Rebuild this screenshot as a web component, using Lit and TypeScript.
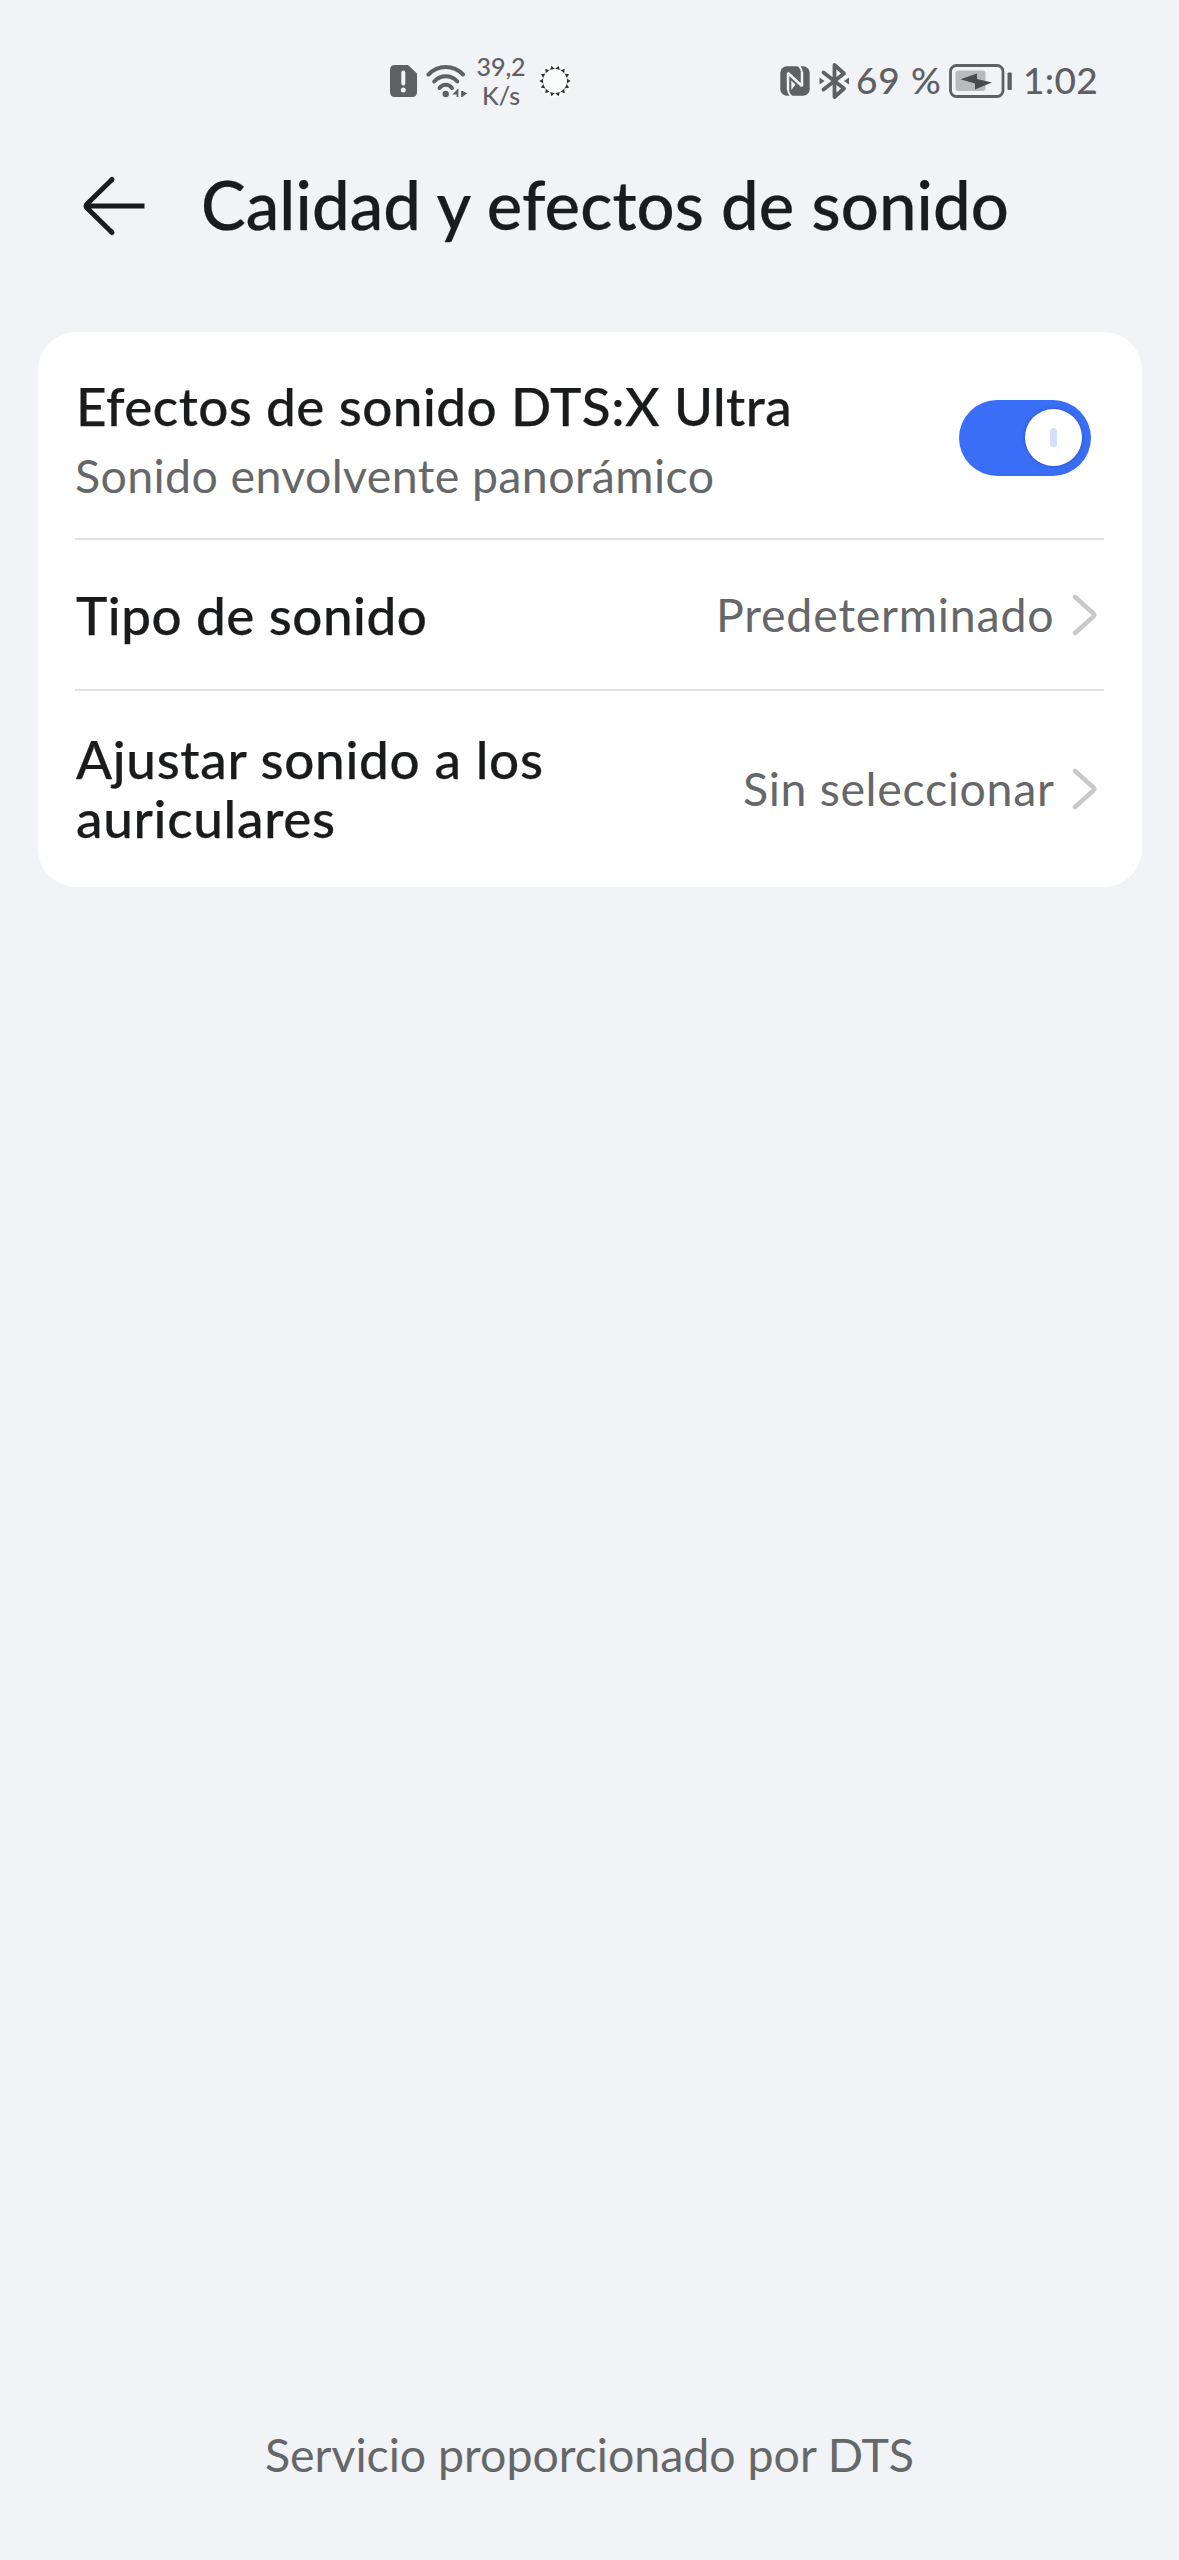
import { LitElement, html, svg, css } from "lit";
import { customElement, property, state } from "lit/decorators.js";

const TICKS = Array.from({ length: 14 }, (_, i) => i * (360 / 14) + 12.86);

@customElement("status-bar")
class StatusBar extends LitElement {
  static styles = css`
    :host {
      display: flex;
      align-items: center;
      justify-content: space-between;
      box-sizing: border-box;
      height: 161px;
      padding: 0 80px 0 389px;
      color: #5f6062;
    }
    .group {
      display: flex;
      align-items: center;
    }
    svg {
      display: block;
      flex: none;
    }
    .wifi {
      margin-left: 9px;
    }
    .speed {
      width: 50px;
      margin-left: 9px;
      font-size: 25px;
      line-height: 29px;
      text-align: center;
      font-weight: 500;
    }
    .busy {
      margin-left: 12px;
    }
    .bt {
      margin-left: 9px;
    }
    .pct,
    .time {
      font-size: 37px;
      line-height: 44px;
      font-weight: 500;
      white-space: nowrap;
      margin-top: -1px;
    }
    .pct {
      width: 84px;
      margin-left: 6px;
      letter-spacing: 0.9px;
    }
    .battery {
      margin-left: 9px;
    }
    .time {
      width: 76px;
      margin-left: 10px;
      letter-spacing: 0.3px;
    }
  `;

  render() {
    return html`
      <div class="group">
        <svg width="28" height="34" viewBox="0 0 28 34">
          <path d="M6 1H19L28 9.500V28Q28 33 23 33H6Q1 33 1 28V6Q1 1 6 1Z" fill="#5f6062" />
          <path d="M14.300 8.500V19.500" stroke="#f1f3f7" stroke-width="4" stroke-linecap="round" />
          <circle cx="14.300" cy="26" r="2.500" fill="#f1f3f7" />
        </svg>
        <svg class="wifi" width="41" height="34" viewBox="0 0 41 34">
          <g fill="none" stroke="#5f6062" stroke-width="4" stroke-linecap="round">
            <path d="M2.500 10.500C12 0.500 27.500 0.500 37 10.500" />
            <path d="M8.200 17.500C14.500 10.600 25 10.600 31.300 17.500" />
            <path d="M13.500 24C17 19.800 22.500 19.800 26 24" />
          </g>
          <circle cx="19.700" cy="30" r="3.200" fill="#5f6062" />
          <path d="M31.500 33V26.500L28.500 29.500H31.500M36 27V33M36 32L39.500 29.500L36 27.500" fill="#5f6062" stroke="#5f6062" stroke-width="1.800" />
        </svg>
        <div class="speed">39,2<br />K/s</div>
        <svg class="busy" width="34" height="34" viewBox="-17 -17 34 34">
          <circle r="16.500" fill="#fbfcfd" />
          <circle r="12.500" fill="none" stroke="#b9b9b9" stroke-width="1" />
          ${TICKS.map((a) => svg`<path d="M-2.200 -12H2.200L0 -15.700Z" fill="#303030" transform="rotate(${a})" />`)}
        </svg>
      </div>
      <div class="group">
        <svg width="30" height="30" viewBox="0 0 30 30">
          <rect x="0.300" y="0.300" width="29.400" height="29.400" rx="6.500" fill="#5f6062" />
          <g fill="none" stroke="#f1f3f7">
            <path d="M8 24V7L22 20V6" stroke-width="2.500" stroke-linejoin="bevel" />
            <path d="M17.500 -1Q21.800 1.500 22 7M12.500 31Q8.200 28.500 8 23" stroke-width="2" />
          </g>
          <path d="M11.300 14.500L15.500 18.500L11.300 24Z" fill="#f1f3f7" />
        </svg>
        <svg class="bt" width="31" height="38" viewBox="0 0 31 38">
          <path d="M4.500 10.500L25 26.500L15.500 35V3L25 11.500L4.500 27.500" fill="none" stroke="#5f6062" stroke-width="3.800" stroke-linecap="round" stroke-linejoin="round" />
          <path d="M0.500 15.500L5.500 19L0.500 22.500ZM30 15.500L25 19L30 22.500Z" fill="#5f6062" />
        </svg>
        <div class="pct">69 %</div>
        <svg class="battery" width="64" height="34" viewBox="0 0 64 34">
          <rect x="1.500" y="1.500" width="52.500" height="31" rx="6" fill="none" stroke="#5f6062" stroke-width="2.800" />
          <rect x="6.500" y="6.500" width="30" height="20.500" rx="3" fill="#b9babd" />
          <path d="M11.500 15.200L28 9.500V15L43 18.500L26 25.500V19.500Z" fill="#4a4b4d" />
          <rect x="58.500" y="8.500" width="4.300" height="17.500" rx="1" fill="#5f6062" />
        </svg>
        <div class="time">1:02</div>
      </div>
    `;
  }
}

@customElement("toggle-switch")
class ToggleSwitch extends LitElement {
  @property({ type: Boolean }) on = false;

  static styles = css`
    .track {
      display: flex;
      align-items: center;
      justify-content: flex-start;
      box-sizing: border-box;
      width: 132px;
      height: 76px;
      padding: 0 9px;
      border-radius: 38px;
      background: #c8c9cc;
    }
    .track.on {
      justify-content: flex-end;
      background: #3b6ef7;
    }
    .thumb {
      display: flex;
      align-items: center;
      justify-content: center;
      width: 57px;
      height: 57px;
      border-radius: 50%;
      background: #fff;
      box-shadow: 0 0 4px rgba(0, 0, 0, 0.25);
    }
    .mark {
      width: 7px;
      height: 19px;
      border-radius: 3.5px;
      background: #d6dffa;
    }
  `;

  render() {
    return html`<div class="track ${this.on ? "on" : ""}">
      <div class="thumb"><div class="mark"></div></div>
    </div>`;
  }
}

@customElement("app-root")
class AppRoot extends LitElement {
  @state() private dtsOn = true;

  static styles = css`
    :host {
      display: flex;
      flex-direction: column;
      height: 2560px;
      background: #f1f3f7;
      color: #1a1b1c;
      font-family: Lato, "Open Sans", sans-serif;
      overflow: hidden;
    }
    .header {
      display: flex;
      align-items: center;
      gap: 54px;
      height: 86px;
      padding-left: 82px;
    }
    .back {
      display: block;
      margin-top: 4px;
    }
    h1 {
      margin: 0;
      font-size: 67px;
      line-height: 80px;
      font-weight: 500;
      letter-spacing: 0.12px;
      white-space: nowrap;
    }
    h1,
    .title {
      -webkit-text-stroke: 0.25px currentColor;
    }
    .card {
      margin: 85px 37.5px 0;
      padding: 0 37.5px;
      border-radius: 38px;
      background: #fff;
    }
    .row {
      display: flex;
      align-items: center;
      justify-content: space-between;
      box-sizing: border-box;
      border-bottom: 2px solid #e3e3e3;
    }
    .effects {
      height: 208px;
      padding: 5px 13px 0 0;
    }
    .effects .title {
      margin-top: 2px;
      letter-spacing: 0.46px;
    }
    .type {
      height: 151px;
    }
    .headphones {
      height: 196px;
      border-bottom: 0;
    }
    .title {
      padding-left: 1px;
      font-size: 53px;
      line-height: 59px;
      font-weight: 500;
      letter-spacing: 0.5px;
    }
    .headphones .title {
      width: 500px;
      margin-top: -2px;
      letter-spacing: 0.7px;
    }
    .sub {
      margin-top: 13px;
      line-height: 54px;
      letter-spacing: 0.38px;
    }
    .sub,
    .value,
    .footer {
      font-size: 46.5px;
      color: #666768;
    }
    .value {
      display: flex;
      align-items: center;
      gap: 16px;
      padding-right: 7.5px;
      line-height: 54px;
    }
    .value span {
      margin-top: -2px;
    }
    .type .value {
      letter-spacing: 0.8px;
    }
    .headphones .value {
      letter-spacing: 0.65px;
    }
    .footer {
      margin-top: auto;
      padding-bottom: 79px;
      line-height: 54px;
      text-align: center;
      letter-spacing: -0.03px;
    }
  `;

  private chevron() {
    return html`<svg width="26" height="42" viewBox="0 0 26 42">
      <path d="M4 3L22.500 19.500Q24 21 22.500 22.500L4 39" fill="none" stroke="#c9c9c9" stroke-width="4.500" stroke-linecap="round" />
    </svg>`;
  }

  render() {
    return html`
      <status-bar></status-bar>
      <div class="header">
        <svg class="back" width="65" height="62" viewBox="0 0 65 62">
          <path d="M30 4.500L5 29Q3 31 5 33L30 57.500M4.500 31H62.500" fill="none" stroke="#1a1b1c" stroke-width="5" />
          <path d="M30 4.500L29.500 5M30 57.500L29.500 57" stroke="#1a1b1c" stroke-width="5" stroke-linecap="round" />
        </svg>
        <h1>Calidad y efectos de sonido</h1>
      </div>
      <div class="card">
        <div class="row effects">
          <div>
            <div class="title">Efectos de sonido DTS:X Ultra</div>
            <div class="sub">Sonido envolvente panorámico</div>
          </div>
          <toggle-switch ?on=${this.dtsOn} @click=${() => (this.dtsOn = !this.dtsOn)}></toggle-switch>
        </div>
        <div class="row type">
          <div class="title">Tipo de sonido</div>
          <div class="value"><span>Predeterminado</span>${this.chevron()}</div>
        </div>
        <div class="row headphones">
          <div class="title">Ajustar sonido a los auriculares</div>
          <div class="value"><span>Sin seleccionar</span>${this.chevron()}</div>
        </div>
      </div>
      <div class="footer">Servicio proporcionado por DTS</div>
    `;
  }
}
